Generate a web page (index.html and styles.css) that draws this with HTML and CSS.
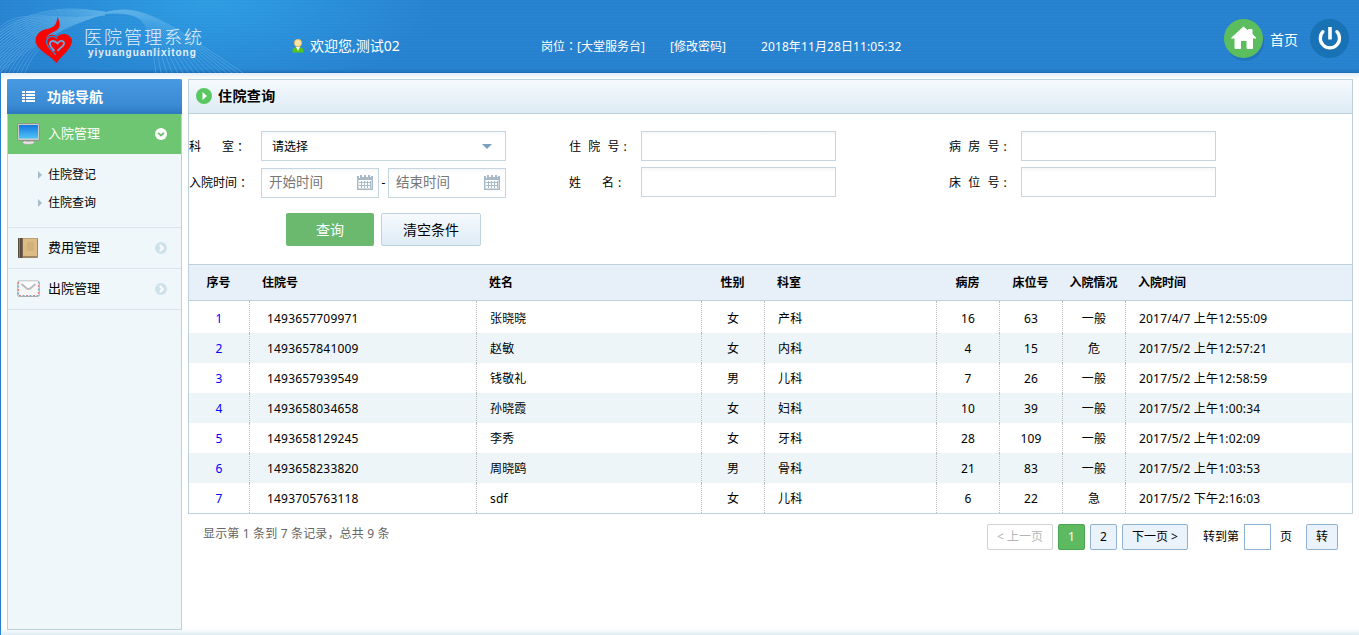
FILE: index.html
```html
<!DOCTYPE html>
<html lang="zh-CN">
<head>
<meta charset="utf-8">
<title>医院管理系统</title>
<link rel="stylesheet" href="styles.css">
</head>
<body>
<header class="top">
  <svg class="waves" width="260" height="73" viewBox="0 0 260 73" id="waves"></svg>
  <svg class="logo" width="38" height="47" viewBox="35 17 38 47">
    <path fill="#f90500" d="M57.5 17C60 22 61 27 57 30C52 33 47 34 46 39C48 35 53 33 57 37C61 32 70 33 72 40C72 49 62 55 56.500 63C50 55 38 51 35.500 42C35 34 41 30 47 29C53 28 57 25 57.500 17Z"/>
    <path fill="none" stroke="#2c8bd8" stroke-width="1.300" d="M56 55C52 50 46.500 47 46.500 41.500C47 36 54 35 57 38.500"/>
    <path fill="none" stroke="#6fa8dc" stroke-width="1.800" d="M54.500 51C52 48 49.500 46 50 43C51 40 55 40.500 57.500 43.500C60 39.500 64.500 40.500 64 44C63.500 46.500 59 48.500 57.500 51"/>
  </svg>
  <div class="brand"><span class="brand-cn">医院管理系统</span><span class="brand-en">yiyuanguanlixitong</span></div>
  <svg class="user" width="12" height="14" viewBox="0 0 12 14"><path fill="#54c51c" d="M.5 13.500Q0 9 3 8.500H9Q12 9 11.500 13.500Z"/><path fill="#fff" d="M4 8h4l-2 4z"/><circle cx="6" cy="4" r="3.700" fill="#ffe3a3" stroke="#efb44f" stroke-width=".7"/></svg>
  <span class="welcome">欢迎您,测试02</span>
  <span class="post">岗位<i class="pc" lang="zh-Hant">：</i>[大堂服务台]</span>
  <span class="pwd">[修改密码]</span>
  <span class="clock">2018年11月28日11:05:32</span>
  <svg class="home" width="42" height="42" viewBox="0 0 42 42"><circle cx="21" cy="23" r="19" fill="#1d6eb6" opacity=".6"/><circle cx="19.500" cy="19.500" r="19.500" fill="#5bbd5d"/><path fill="#fff" stroke="#fff" stroke-linejoin="round" d="M19.500 8L7.500 19H11V29.500H16.500V21.500H23V29.500H28.500V19H32L28 15.300V10.500H24.500V12.300Z"/></svg>
  <span class="home-text">首页</span>
  <svg class="power" width="39" height="39" viewBox="0 0 39 39"><circle cx="19.500" cy="19.500" r="19.500" fill="#1872b4"/><path fill="none" stroke="#fff" stroke-width="3.300" stroke-linecap="round" d="M12.900 12.700A9.600 9.600 0 1 0 26.900 12.700"/><path stroke="#fff" stroke-width="3.600" d="M20 8V20.500"/></svg>
</header>
<div class="page">
  <nav class="side">
    <div class="side-title"><svg width="13" height="12" viewBox="0 0 13 12"><path fill="#fff" d="M0 0h3v2H0zM4 0h9v2H4zM0 3h3v2H0zM4 3h9v2H4zM0 6h3v2H0zM4 6h9v2H4zM0 9h3v2H0zM4 9h9v2H4z"/></svg>功能导航</div>
    <div class="item active">
      <svg class="ico" width="23" height="22" viewBox="0 0 23 22"><defs><linearGradient id="scr" x2="0" y2="1"><stop stop-color="#1578dd"/><stop offset="1" stop-color="#4fc4f7"/></linearGradient></defs><ellipse cx="11.500" cy="19.500" rx="6" ry="2" fill="#e4e4de" stroke="#8b8f86" stroke-width=".5"/><path fill="#bbb" d="M9 16h5v3H9z"/><rect x=".5" y=".5" width="22" height="17" rx="1.500" fill="#c9cdc8" stroke="#8d938d"/><rect x="2" y="2" width="19" height="13.500" fill="url(#scr)"/></svg>
      <span>入院管理</span>
      <svg class="arrow" width="12" height="12" viewBox="0 0 12 12"><circle cx="6" cy="6" r="6" fill="#fff"/><path fill="none" stroke="#6cc06f" stroke-width="1.700" d="M3 4.800L6 7.500L9 4.800"/></svg>
    </div>
    <div class="sub"><a>住院登记</a><a>住院查询</a></div>
    <div class="item">
      <svg class="ico" width="23" height="22" viewBox="0 0 23 22"><rect x="1" y="1" width="20" height="20" rx="1" fill="#a08763"/><rect x="6" y="1.500" width="14" height="17.500" fill="#dcbc85"/><rect x="10" y="5" width="7" height="9" fill="#d3b079"/><rect x="1" y="1" width="4.500" height="20" fill="#5a4c43"/><path stroke="#8a7b6f" d="M2.500 1v20"/></svg>
      <span>费用管理</span>
      <svg class="arrow" width="12" height="12" viewBox="0 0 12 12"><circle cx="6" cy="6" r="6" fill="#cfe1e9"/><path fill="none" stroke="#fff" stroke-width="1.800" d="M4.800 3L7.800 6L4.800 9"/></svg>
    </div>
    <div class="item">
      <svg class="ico" width="23" height="22" viewBox="0 0 23 22"><rect x=".7" y="3" width="21.600" height="15.500" rx="1.500" fill="#f6f6f6" stroke="#a5a5a5" stroke-width=".9"/><path fill="none" stroke="#e58080" stroke-width="1.200" stroke-dasharray="2 5" d="M1.500 4V17.500H21.500V4"/><path fill="none" stroke="#7fabd0" stroke-width="1.200" stroke-dasharray="2 5" stroke-dashoffset="3.500" d="M1.500 4V17.500H21.500V4"/><path fill="#fff" d="M2 3.500H21L13.500 10.500Q11.500 12 9.500 10.500Z"/><path fill="none" stroke="#bcbcbc" stroke-width="2" d="M4.500 6L9.500 10.300Q11.500 11.500 13.500 10.300L18.500 6"/></svg>
      <span>出院管理</span>
      <svg class="arrow" width="12" height="12" viewBox="0 0 12 12"><circle cx="6" cy="6" r="6" fill="#cfe1e9"/><path fill="none" stroke="#fff" stroke-width="1.800" d="M4.800 3L7.800 6L4.800 9"/></svg>
    </div>
  </nav>
  <main class="main">
    <section class="panel">
      <h1 class="title"><svg width="16" height="16" viewBox="0 0 16 16"><circle cx="8" cy="8" r="8" fill="#5bc763"/><path fill="#fff" d="M6.500 4L11 8L6.500 12Z"/></svg>住院查询</h1>
      <div class="form">
        <div class="fcol">
          <div class="field"><label><b>科</b>室<i class="pc" lang="zh-Hant">：</i></label><div class="select">请选择<svg width="10" height="5" viewBox="0 0 10 5"><path fill="#7ba0bf" d="M0 0h10L5 5z"/></svg></div></div>
          <div class="field dates"><label>入院时间<i class="pc" lang="zh-Hant">：</i></label>
            <div class="date">开始时间<svg width="16" height="15" viewBox="0 0 16 15"><path fill="#a8bac7" fill-rule="evenodd" d="M0 1h2v2h1V0h2v2h2V0h2v2h2V0h2v2h1V1h2v14H0zM1.500 5v8.500h13V5z"/><path stroke="#a8bac7" d="M2 7.500h12M2 10.500h12M4.500 6v7M7.500 6v7M10.500 6v7M13.500 6v7"/></svg></div><em>-</em><div class="date">结束时间<svg width="16" height="15" viewBox="0 0 16 15"><path fill="#a8bac7" fill-rule="evenodd" d="M0 1h2v2h1V0h2v2h2V0h2v2h2V0h2v2h1V1h2v14H0zM1.500 5v8.500h13V5z"/><path stroke="#a8bac7" d="M2 7.500h12M2 10.500h12M4.500 6v7M7.500 6v7M10.500 6v7M13.500 6v7"/></svg></div></div>
        </div>
        <div class="fcol">
          <div class="field"><label><span class="wide">住院</span>号<i class="colon">:</i></label><div class="input"></div></div>
          <div class="field"><label><b>姓</b>名<i class="colon">:</i></label><div class="input"></div></div>
        </div>
        <div class="fcol">
          <div class="field"><label><span class="wide">病房</span>号<i class="colon">:</i></label><div class="input"></div></div>
          <div class="field"><label><span class="wide">床位</span>号<i class="colon">:</i></label><div class="input"></div></div>
        </div>
      </div>
      <div class="actions"><button class="btn go">查询</button><button class="btn">清空条件</button></div>
      <table class="grid">
        <colgroup><col class="c1"><col class="c2"><col class="c3"><col class="s"><col class="c5"><col class="s"><col class="s"><col class="s"><col></colgroup>
        <thead><tr><th class="c">序号</th><th>住院号</th><th>姓名</th><th class="c">性别</th><th>科室</th><th class="c">病房</th><th class="c">床位号</th><th class="c">入院情况</th><th>入院时间</th></tr></thead>
        <tbody>
          <tr><td class="c no">1</td><td class="id">1493657709971</td><td>张晓晓</td><td class="c">女</td><td>产科</td><td class="c">16</td><td class="c">63</td><td class="c">一般</td><td>2017/4/7 上午12:55:09</td></tr>
          <tr><td class="c no">2</td><td class="id">1493657841009</td><td>赵敏</td><td class="c">女</td><td>内科</td><td class="c">4</td><td class="c">15</td><td class="c">危</td><td>2017/5/2 上午12:57:21</td></tr>
          <tr><td class="c no">3</td><td class="id">1493657939549</td><td>钱敬礼</td><td class="c">男</td><td>儿科</td><td class="c">7</td><td class="c">26</td><td class="c">一般</td><td>2017/5/2 上午12:58:59</td></tr>
          <tr><td class="c no">4</td><td class="id">1493658034658</td><td>孙晓霞</td><td class="c">女</td><td>妇科</td><td class="c">10</td><td class="c">39</td><td class="c">一般</td><td>2017/5/2 上午1:00:34</td></tr>
          <tr><td class="c no">5</td><td class="id">1493658129245</td><td>李秀</td><td class="c">女</td><td>牙科</td><td class="c">28</td><td class="c">109</td><td class="c">一般</td><td>2017/5/2 上午1:02:09</td></tr>
          <tr><td class="c no">6</td><td class="id">1493658233820</td><td>周晓鸥</td><td class="c">男</td><td>骨科</td><td class="c">21</td><td class="c">83</td><td class="c">一般</td><td>2017/5/2 上午1:03:53</td></tr>
          <tr><td class="c no">7</td><td class="id">1493705763118</td><td>sdf</td><td class="c">女</td><td>儿科</td><td class="c">6</td><td class="c">22</td><td class="c">急</td><td>2017/5/2 下午2:16:03</td></tr>
        </tbody>
      </table>
    </section>
    <footer class="foot">
      <span class="count">显示第 1 条到 7 条记录，总共 9 条</span>
      <div class="pager"><span class="pg off">&lt; 上一页</span><span class="pg on">1</span><span class="pg">2</span><span class="pg next">下一页 &gt;</span><span class="to">转到第</span><span class="jump"></span><span class="ye">页</span><span class="pg zhuan">转</span></div>
    </footer>
  </main>
</div>
<script src="waves.js"></script>
</body>
</html>
```
FILE: waves.js
```js
// Header decoration: two fans of thin curves.
const box = document.getElementById('waves');
let markup = '';
for (let i = 0; i < 17; i++) {
  const t = i / 16;
  const a = `M${-40 + t * 65} 73C${10 + t * 25} ${5 + t * 38} ${60 + t * 10} ${5 + t * 13} 105 ${12 + t * 3}`;
  const b = `M0 ${27 + t * 45}C${25 + t * 20} ${4 + t * 30} 70 26 105 13C${140 + t * 6} ${2 + t * 10} ${165 - t * 15} 20 ${246 - t * 90} 75`;
  for (const d of [a, b]) markup += `<path d="${d}"/>`;
}
box.innerHTML = markup;
```
FILE: styles.css
```css
* { box-sizing: border-box; }
body { margin: 0; height: 635px; overflow: hidden; background: #fff; color: #000; font: 12px/16px "Noto Sans", "Noto Sans CJK SC", sans-serif; }
i, em { font-style: normal; }
svg { display: block; flex: none; }
.pc { font-family: "Noto Sans CJK TC", sans-serif; line-height: 1; }
.top { position: relative; height: 73px; color: #fff; background: repeating-linear-gradient(0deg, rgba(0,40,110,.035) 0 1px, transparent 1px 3px), linear-gradient(180deg, transparent 69px, #1d6fb8 73px), radial-gradient(ellipse 230px 95px at 210px 0, #2f9fe5, rgba(47,159,229,0)), #2883d1; }
.top > * { position: absolute; white-space: nowrap; }
.waves { left: 0; top: 0; fill: none; stroke: #8ed0f5; stroke-width: .6; opacity: .5; }
.logo { left: 35px; top: 17px; }
.brand { left: 84px; top: 24px; display: flex; flex-direction: column; color: #e1effc; }
.brand-cn { font: 300 18px/24px "Noto Sans CJK SC", sans-serif; letter-spacing: 2px; }
.brand-en { font: bold 10px/10px "Liberation Sans", sans-serif; letter-spacing: .98px; margin-left: 4px; }
.user { left: 292px; top: 39px; }
.welcome { left: 310px; top: 36px; font-size: 14px; line-height: 20px; }
.post { left: 541px; top: 39px; }
.pwd { left: 670px; top: 39px; }
.clock { left: 761px; top: 39px; letter-spacing: .1px; }
.home { left: 1224px; top: 19px; }
.home-text { left: 1270px; top: 30px; font-size: 14px; line-height: 20px; }
.power { left: 1310px; top: 19px; }
.page { height: 562px; display: flex; gap: 6px; padding: 6px 6px 5px; border-left: 1px solid #2681d0; background: linear-gradient(#e1edf6, #fff 6px, #fff 556px, #dcebf4 562px); }
.side { width: 175px; height: 551px; border: 1px solid #bcd0dc; border-top: 0; background: #eff7fb; }
.side-title { height: 35px; margin: 0 -1px; padding-left: 15px; display: flex; align-items: center; gap: 12px; color: #fff; font-size: 14px; font-weight: bold; background: linear-gradient(#4799e2, #3a8bd4 75%, #2d79c0); border-radius: 2px 2px 0 0; }
.item { height: 41px; display: flex; align-items: center; padding: 0 14px 0 9px; font-size: 13px; border-bottom: 1px solid #d8e6ec; }
.item span { flex: 1; margin-left: 8px; padding-bottom: 2px; }
.item.active { height: 40px; color: #fff; background: #6fc672; border: 0; }
.sub { height: 74px; padding-top: 7px; border-bottom: 1px solid #d8e6ec; }
.sub a { display: flex; align-items: center; height: 28px; padding-left: 30px; gap: 6px; }
.sub a::before { content: ""; border: 4px solid transparent; border-left-color: #a5bccb; border-right: 0; }
.main { width: 1165px; }
.panel { height: 435px; border: 1px solid #bdd1dd; }
.title { height: 34px; margin: 0; padding-left: 7px; display: flex; align-items: center; gap: 6px; font-size: 14px; line-height: 20px; padding-bottom: 1px; letter-spacing: .4px; font-weight: bold; border-bottom: 1px solid #bdd1dd; background: linear-gradient(#f6fafd, #ddebf5); }
.form { display: flex; padding-top: 17px; height: 99px; }
.fcol { width: 380px; display: flex; flex-direction: column; gap: 6px; }
.field { display: flex; height: 30px; align-items: center; }
.dates { margin-top: 1px; }
.field label { width: 72px; display: flex; align-items: center; padding-top: 2px; }
.dates label { padding-top: 0; }
.field b { width: 33px; font-weight: normal; }
.wide { letter-spacing: 7.200px; }
.colon { margin-left: 4px; }
.select, .date, .input { height: 30px; border: 1px solid #c5d6e1; background: linear-gradient(#f5f6f7, #fff 4px); display: flex; align-items: center; justify-content: space-between; }
.select { width: 245px; padding: 1px 13px 0 10px; }
.input { width: 195px; }
.date { width: 118px; padding: 0 5px 2px 7px; font-size: 13.500px; color: #777; }
.dates em { width: 9px; text-align: center; }
.actions { height: 51px; display: flex; gap: 7px; padding-left: 97px; }
.btn { width: 100px; height: 33px; padding: 0 0 2px; border: 1px solid #bdd1df; border-radius: 2px; background: linear-gradient(#f6fafd, #deecf6); font: 14px "Noto Sans", "Noto Sans CJK SC", sans-serif; color: #000; }
.go { width: 88px; border: 0; background: #6bb86f; color: #fff; }
.grid { width: 1163px; table-layout: fixed; border-collapse: separate; border-spacing: 0; white-space: nowrap; }
.c1 { width: 61px; } .c2 { width: 227px; } .c3 { width: 225px; } .c5 { width: 172px; } .s { width: 63px; }
.grid th { height: 37px; padding: 1px 0 0 12px; text-align: left; font-weight: bold; background: #e7f0f8; border: solid #bdd1dd; border-width: 1px 0; }
.grid td { height: 30px; padding: 2px 0 0 13px; letter-spacing: .18px; border-right: 1px dotted #bcbcbc; }
.grid td:last-child { border-right: 0; }
.grid td.id { padding-left: 17px; }
.grid tr > .c { padding-left: 0; text-align: center; }
.grid tr > th.c { padding-right: 2px; }
.grid tbody tr:first-child td { height: 32px; padding-top: 4px; }
.grid tbody tr:nth-child(even) { background: #edf5f9; }
.grid .no { color: #00f; }
.foot { display: flex; justify-content: space-between; padding: 10px 15px 0; }
.count { color: #666; margin-top: 2px; letter-spacing: .16px; }
.pager { display: flex; align-items: center; height: 26px; }
.pg { height: 26px; display: flex; align-items: center; justify-content: center; width: 27px; margin-right: 5px; border: 1px solid #8fb2d3; border-radius: 2px; background: #eaf3fb; }
.off { width: 66px; border-color: #d2d2d2; background: #fff; color: #b5b5b5; }
.on { background: #5dba61; border-color: #4ba651; color: #fff; }
.next { width: 66px; margin-right: 15px; }
.to { margin-right: 5px; }
.jump { width: 27px; height: 26px; border: 1px solid #8fb2d3; margin-right: 9px; }
.ye { margin-right: 14px; }
.zhuan { width: 32px; margin-right: 0; }
```
